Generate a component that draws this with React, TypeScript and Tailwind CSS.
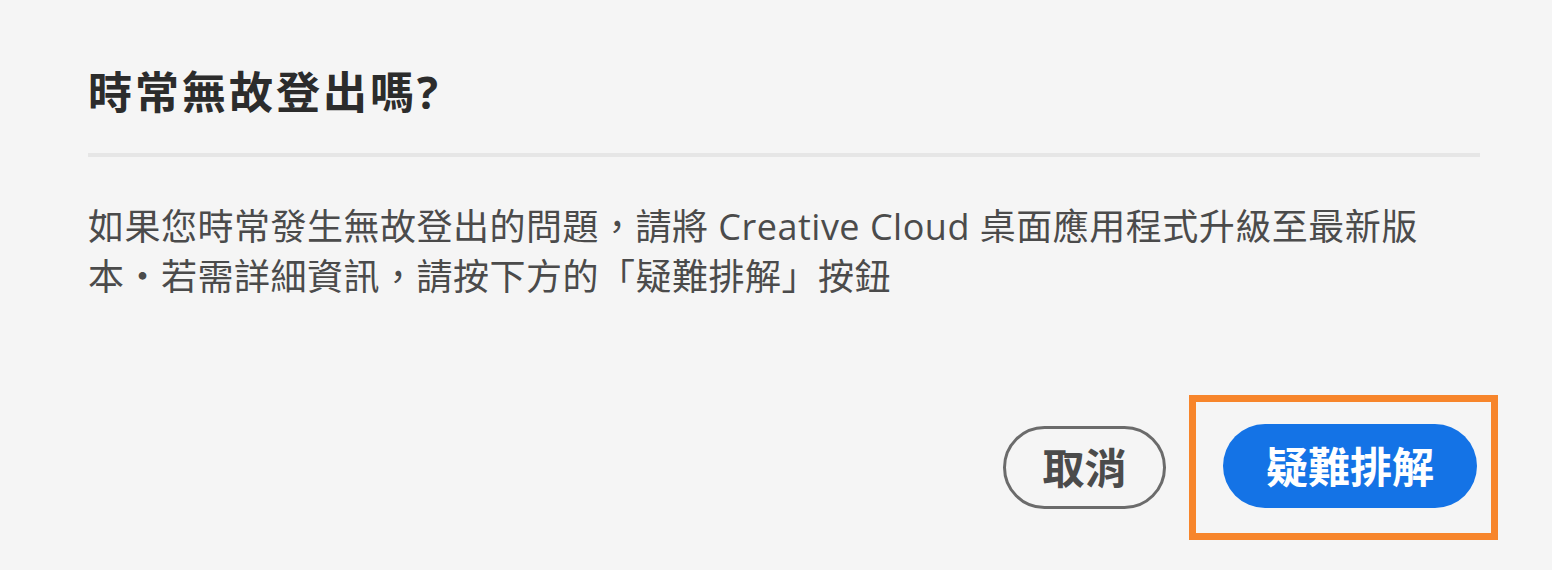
import React from 'react'

// Sign-out troubleshooting dialog

const FONT = '"Open Sans", "Noto Sans CJK TC", "Noto Sans", sans-serif'

export default function App() {
  return (
    <div
      className="w-full h-[570px] bg-[#f5f5f5] overflow-hidden"
      style={{ fontFamily: FONT }}
    >
      <div className="pl-[88px] pr-[72px] pt-[64px]">
        <h1 className="text-[44px] leading-[56px] font-bold tracking-[3px] text-[#2c2c2c]">
          時常無故登出嗎?
        </h1>
        <div className="mt-[33px] h-[4px] bg-[#e6e6e6]" />
        <p className="mt-[45px] text-[36px] leading-[50px] tracking-[0.5px] text-[#4b4b4b]">
          如果您時常發生無故登出的問題，請將 Creative Cloud 桌面應用程式升級至最新版
          <br />
          本・若需詳細資訊，請按下方的「疑難排解」按鈕
        </p>
      </div>

      <div className="mt-[93px] pr-[54px] flex justify-end items-center gap-[23px]">
        <button
          type="button"
          className="w-[163px] h-[83px] rounded-full border-[3px] border-[#6b6b6b] text-[42px] font-bold text-[#4b4b4b] flex items-center justify-center"
        >
          取消
        </button>
        {/* highlighted action */}
        <div className="border-[7px] border-[#f7852b] pl-[27px] pr-[14px] pt-[22px] pb-[25px]">
          <button
            type="button"
            className="w-[254px] h-[84px] rounded-full bg-[#1473e6] text-[42px] font-bold text-white flex items-center justify-center"
          >
            疑難排解
          </button>
        </div>
      </div>
    </div>
  )
}
